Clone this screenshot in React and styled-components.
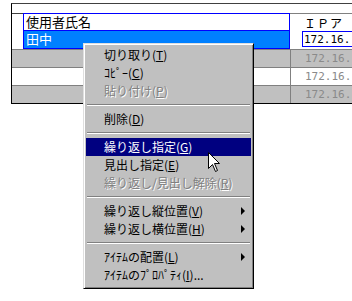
import styled, { createGlobalStyle } from "styled-components";

const GlobalStyle = createGlobalStyle`
  html, body {
    margin: 0;
    padding: 0;
    background: #ffffff;
  }
  body {
    font-family: "Noto Sans CJK JP", "Noto Sans", sans-serif;
  }
`;

const StPage = styled.div`
  position: relative;
  width: 352px;
  height: 301px;
  overflow: hidden;
  background: #ffffff;
`;

const StTable = styled.div`
  margin: 3px 0 0 11px;
  width: 341px;
  overflow: hidden;
  border-top: 1px solid #404040;
  border-left: 1px solid #000000;
  border-bottom: 1px solid #000000;
  display: flex;
  flex-direction: column;
`;

const StSpacer = styled.div`
  height: 9px;
  background: #ffffff;
`;

const StRow = styled.div`
  display: flex;
  height: 18px;
  background: ${(p) => (p.$gray ? "#c0c0c0" : "#ffffff")};
  border-top: ${(p) => (p.$line ? "1px solid #808080" : "none")};
  box-sizing: border-box;
`;

const StStub = styled.div`
  width: 11px;
  flex: none;
  box-sizing: border-box;
  border-top: ${(p) => (p.$top ? "1px solid #404040" : "none")};
  background: #ffffff;
`;

const StNameCell = styled.div`
  width: ${(p) => (p.$wide ? "278px" : "267px")};
  flex: none;
  box-sizing: border-box;
  padding-left: 2px;
  font-size: 13px;
  line-height: 15px;
  color: ${(p) => (p.$selected ? "#ffffff" : "#000000")};
  background: ${(p) => (p.$selected ? "#0080ff" : "transparent")};
  border: ${(p) => (p.$boxed ? "1px solid #0000ff" : "none")};
  border-top: ${(p) => (p.$selected ? "none" : undefined)};
  white-space: nowrap;
`;

const StIpCell = styled.div`
  flex: 1;
  min-width: 0;
  box-sizing: border-box;
  padding-left: ${(p) => (p.$pad ? p.$pad : "14px")};
  border-left: ${(p) => (p.$blue ? "none" : "1px solid #808080")};
  border-top: ${(p) => (p.$top ? "1px solid #808080" : "none")};
  background: ${(p) => (p.$gray ? "#c0c0c0" : "#ffffff")};
  font-family: "DejaVu Sans Mono", "Liberation Mono", monospace;
  font-size: 11px;
  line-height: 17px;
  color: ${(p) => (p.$muted ? "#8a8a8a" : "#000000")};
  white-space: nowrap;
  overflow: hidden;
`;

const StHeadIp = styled.span`
  font-family: "Noto Sans CJK JP", sans-serif;
  font-size: 12px;
  letter-spacing: 1px;
`;

const StFocus = styled.span`
  display: inline-block;
  border: 1px solid #0000ff;
  border-right: none;
  padding-left: 1px;
  height: 16px;
  line-height: 15px;
  box-sizing: border-box;
  width: 60px;
  overflow: hidden;
`;

const StMenu = styled.div`
  position: absolute;
  left: 83px;
  top: 43px;
  width: 171px;
  box-sizing: border-box;
  background: #c0c0c0;
  border: 1px solid;
  border-color: #dfdfdf #000000 #000000 #dfdfdf;
  box-shadow: inset 1px 1px 0 #ffffff, inset -1px -1px 0 #808080;
  padding: 2px 2px 4px;
  display: flex;
  flex-direction: column;
`;

const StItem = styled.div`
  display: flex;
  align-items: center;
  justify-content: space-between;
  height: 18px;
  padding: 0 6px 0 18px;
  font-size: 12px;
  line-height: 18px;
  white-space: nowrap;
  background: ${(p) => (p.$active ? "#000080" : "transparent")};
  color: ${(p) => (p.$active ? "#ffffff" : p.$disabled ? "#808080" : "#000000")};
  text-shadow: ${(p) => (p.$disabled ? "1px 1px 0 #ffffff" : "none")};
`;

const StArrow = styled.span`
  width: 0;
  height: 0;
  border-top: 4px solid transparent;
  border-bottom: 4px solid transparent;
  border-left: 4px solid #000000;
`;

const StSeparator = styled.div`
  height: 10px;
  display: flex;
  flex-direction: column;
  justify-content: center;
  padding: 0 1px;

  &::before {
    content: "";
    height: 1px;
    background: #808080;
  }
  &::after {
    content: "";
    height: 1px;
    background: #ffffff;
  }
`;

const StCursor = styled.svg`
  position: absolute;
  left: 208px;
  top: 152px;
`;

const menu = [
  { label: "切り取り", key: "T" },
  { label: "ｺﾋﾟｰ", key: "C" },
  { label: "貼り付け", key: "P", disabled: true },
  { sep: true },
  { label: "削除", key: "D" },
  { sep: true },
  { label: "繰り返し指定", key: "G", active: true },
  { label: "見出し指定", key: "E" },
  { label: "繰り返し/見出し解除", key: "R", disabled: true },
  { sep: true },
  { label: "繰り返し縦位置", key: "V", sub: true },
  { label: "繰り返し横位置", key: "H", sub: true },
  { sep: true },
  { label: "ｱｲﾃﾑの配置", key: "L", sub: true },
  { label: "ｱｲﾃﾑのﾌﾟﾛﾊﾟﾃｨ", key: "I", tail: "..." },
];

const rows = [
  { gray: true, ip: "172.16." },
  { gray: false, ip: "172.16." },
  { gray: true, ip: "172.16." },
];

function App() {
  return (
    <>
      <GlobalStyle />
      <StPage>
        <StTable>
          <StSpacer />
          <StRow>
            <StStub $top />
            <StNameCell $boxed>使用者氏名</StNameCell>
            <StIpCell $blue $top>
              <StHeadIp>ＩＰア</StHeadIp>
            </StIpCell>
          </StRow>
          <StRow>
            <StStub />
            <StNameCell $boxed $selected>田中</StNameCell>
            <StIpCell $blue $pad="12px">
              <StFocus>172.16.</StFocus>
            </StIpCell>
          </StRow>
          {rows.map((r, i) => (
            <StRow key={i} $gray={r.gray} $line>
              <StNameCell $wide />
              <StIpCell $gray={r.gray} $muted>
                {r.ip}
              </StIpCell>
            </StRow>
          ))}
        </StTable>

        <StMenu>
          {menu.map((m, i) =>
            m.sep ? (
              <StSeparator key={i} />
            ) : (
              <StItem key={i} $active={m.active} $disabled={m.disabled}>
                <span>
                  {m.label}(<u>{m.key}</u>){m.tail}
                </span>
                {m.sub && <StArrow />}
              </StItem>
            )
          )}
        </StMenu>

        <StCursor width="13" height="21" viewBox="0 0 13 21">
          <path
            d="M0.5 0.5 L0.5 16.5 L4.5 12.5 L7.5 19.5 L9.5 18.5 L6.5 11.5 L11.5 11.5 Z"
            fill="#ffffff"
            stroke="#000000"
            strokeWidth="1"
          />
        </StCursor>
      </StPage>
    </>
  );
}

export default App;
